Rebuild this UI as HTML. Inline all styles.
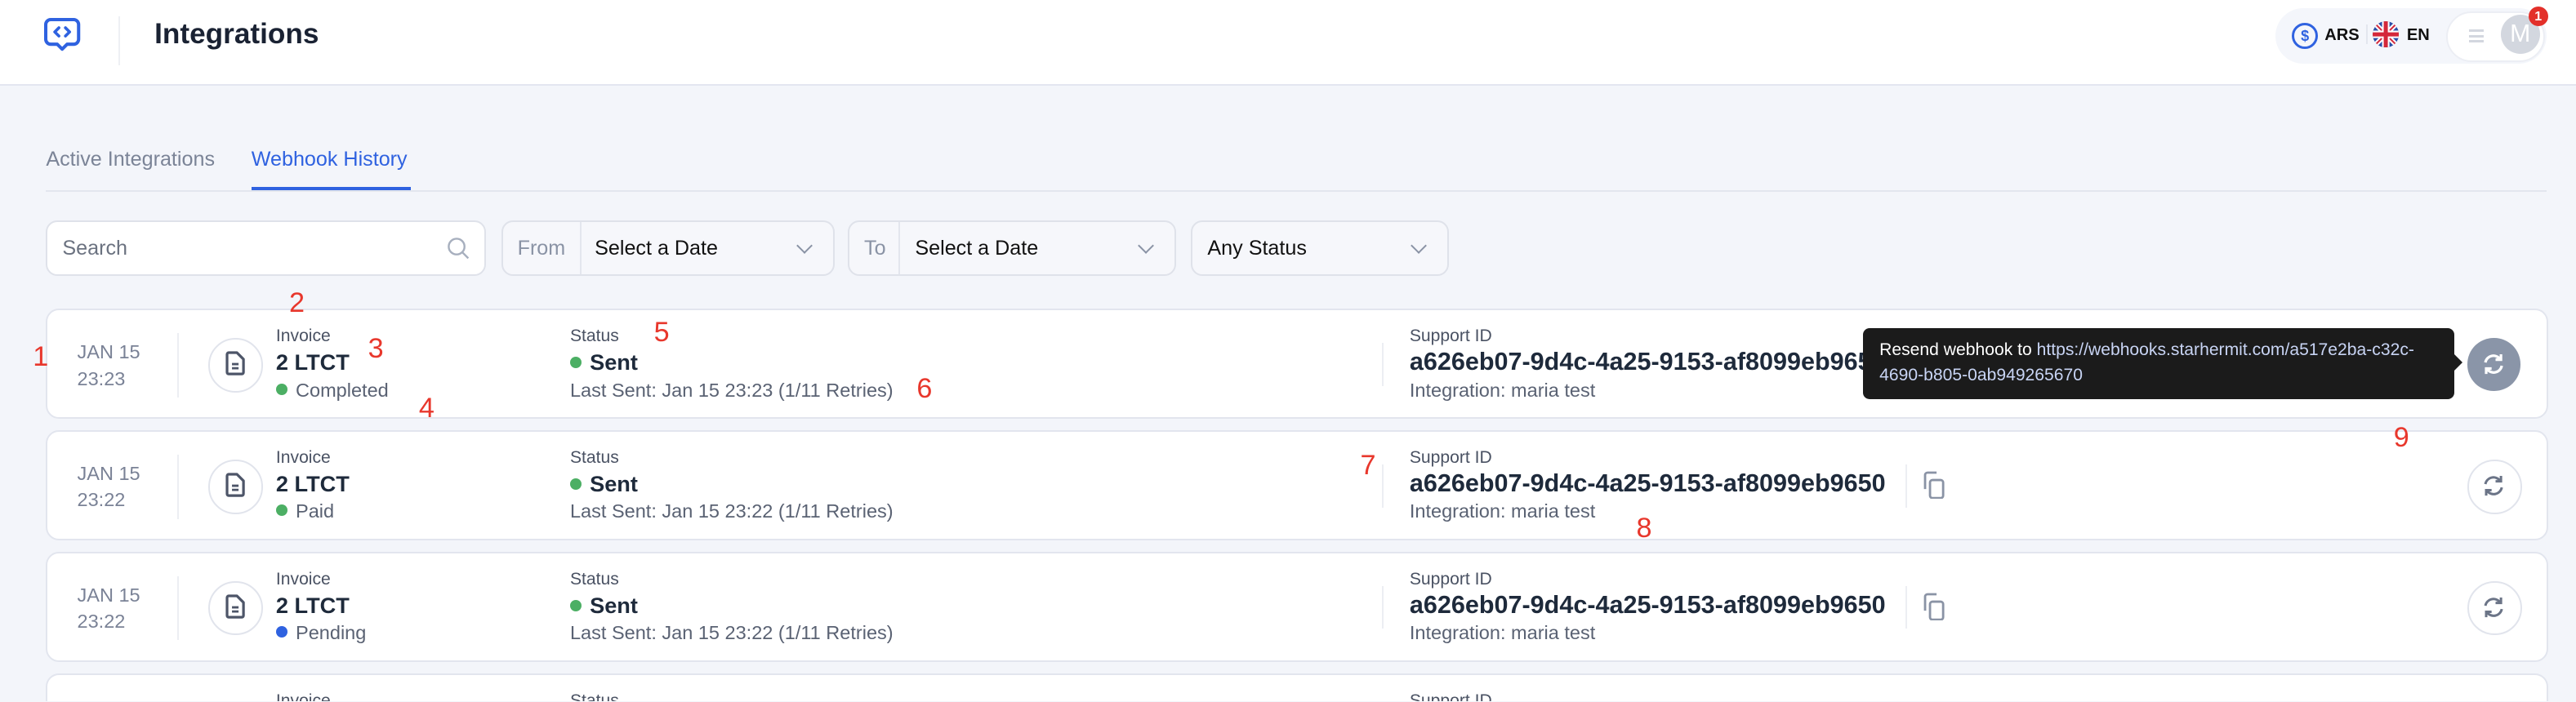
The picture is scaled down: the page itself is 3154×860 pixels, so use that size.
<!DOCTYPE html>
<html><head><meta charset="utf-8"><style>
html{margin:0;padding:0;width:3154px;height:860px;overflow:hidden}
body{margin:0;padding:0;width:1568px;height:427px;zoom:2.0115;overflow:hidden;background:#f3f5fa;font-family:"Liberation Sans",sans-serif;position:relative;color:#1e2a3b}
.a{position:absolute;white-space:nowrap}
.hdr{position:absolute;left:0;top:0;width:1568px;height:51px;background:#fff;border-bottom:1px solid #e3e6f0}
.row{position:absolute;left:28px;width:1523px;height:67px;background:#fff;border:1px solid #e2e5ee;border-radius:8px;box-sizing:border-box;overflow:hidden}
.lbl{font-size:10.5px;color:#4a5263}
.big{font-size:13.5px;font-weight:bold;color:#1e2a3b}
.uuid{font-size:15.2px;font-weight:bold;color:#1e2a3b}
.sub{font-size:11.7px;color:#5a6273}
.dot{display:inline-block;width:7px;height:7px;border-radius:50%;margin-right:5px;vertical-align:1px}
.num{position:absolute;color:#e8372c;font-size:17px;line-height:17px}
.box{position:absolute;top:134px;height:34px;border:1px solid #dfe2ea;border-radius:7px;box-sizing:border-box;background:#f6f7fb;font-size:12.5px}
.chev{position:absolute;right:14px;top:11px;width:6px;height:6px;border-right:1px solid #8a93a5;border-bottom:1px solid #8a93a5;transform:rotate(45deg)}
</style></head><body>
<div class="hdr">
  <svg class="a" style="left:27px;top:10px" width="22" height="22" viewBox="0 0 22 22"><path d="M4 2h14a3 3 0 0 1 3 3v9a3 3 0 0 1-3 3h-4l-3 3-3-3H4a3 3 0 0 1-3-3V5a3 3 0 0 1 3-3z" fill="none" stroke="#2f62e0" stroke-width="2" stroke-linejoin="round"/><path d="M9 7l-2.5 2.5L9 12M13 7l2.5 2.5L13 12" fill="none" stroke="#2f62e0" stroke-width="1.8" stroke-linecap="round" stroke-linejoin="round"/></svg>
  <div class="a" style="left:72px;top:10px;width:1px;height:30px;background:#eef0f4"></div>
  <div class="a" style="left:94px;top:11px;font-size:17.5px;font-weight:bold;color:#1a2233">Integrations</div>
  <div class="a" style="left:1385px;top:5px;width:165px;height:34px;border-radius:17px;background:#f4f6fb"></div>
  <div class="a" style="left:1395px;top:14px;width:13px;height:13px;border:1.5px solid #2f62e0;border-radius:50%;font-size:9px;font-weight:bold;color:#2f62e0;text-align:center;line-height:13px">$</div>
  <div class="a" style="left:1415px;top:16px;font-size:10px;font-weight:bold;color:#111">ARS</div>
  <div class="a" style="left:1440px;top:15px;width:1px;height:12px;background:#e3e6ee"></div>
  <svg class="a" style="left:1444px;top:13px" width="16" height="16" viewBox="0 0 16 16"><clipPath id="c"><circle cx="8" cy="8" r="8"/></clipPath><g clip-path="url(#c)"><rect width="16" height="16" fill="#2a4fa8"/><path d="M0 0L16 16M16 0L0 16" stroke="#fff" stroke-width="3"/><path d="M0 0L16 16M16 0L0 16" stroke="#d4283a" stroke-width="1"/><path d="M8 0V16M0 8H16" stroke="#fff" stroke-width="4.5"/><path d="M8 0V16M0 8H16" stroke="#d4283a" stroke-width="2.5"/></g></svg>
  <div class="a" style="left:1465px;top:16px;font-size:10px;font-weight:bold;color:#111">EN</div>
  <div class="a" style="left:1489px;top:7px;width:60px;height:31px;border-radius:16px;background:#fff;border:1px solid #eceef4;box-sizing:border-box"></div>
  <div class="a" style="left:1503px;top:18px;width:9px;height:8px;border-top:1.5px solid #d3d7df;border-bottom:1.5px solid #d3d7df;box-sizing:border-box"></div>
  <div class="a" style="left:1503px;top:21.3px;width:9px;height:1.5px;background:#d3d7df"></div>
  <div class="a" style="left:1522px;top:9px;width:24px;height:24px;border-radius:50%;background:#d3d7df;color:#fff;font-size:15px;text-align:center;line-height:24px">M</div>
  <div class="a" style="left:1539px;top:4px;width:12px;height:12px;border-radius:50%;background:#e3302a;color:#fff;font-size:8px;font-weight:bold;text-align:center;line-height:12px">1</div>
</div>

<div class="a" style="left:28px;top:90px;font-size:12.5px;color:#7b8497">Active Integrations</div>
<div class="a" style="left:153px;top:90px;font-size:12.5px;color:#2f62e0">Webhook History</div>
<div class="a" style="left:28px;top:116px;width:1522px;height:1px;background:#e3e6ee"></div>
<div class="a" style="left:153px;top:114px;width:97px;height:2px;background:#2f62e0"></div>

<div class="box" style="left:28px;width:268px;background:#fff"><span class="a" style="left:9px;top:9px;color:#6b7280">Search</span>
<svg class="a" style="right:8px;top:9px" width="15" height="15" viewBox="0 0 15 15"><circle cx="6" cy="6" r="4.8" fill="none" stroke="#a7afbe" stroke-width="1.2"/><path d="M9.6 9.6l3.5 3.5" stroke="#a7afbe" stroke-width="1.2"/></svg></div>
<div class="box" style="left:305px;width:203px"><span class="a" style="left:9px;top:9px;color:#8a93a5">From</span><div class="a" style="left:47px;top:0;width:1px;height:32px;background:#e3e6ee"></div><span class="a" style="left:56px;top:9px;color:#111">Select a Date</span><div class="chev"></div></div>
<div class="box" style="left:516px;width:200px"><span class="a" style="left:9px;top:9px;color:#8a93a5">To</span><div class="a" style="left:30px;top:0;width:1px;height:32px;background:#e3e6ee"></div><span class="a" style="left:40px;top:9px;color:#111">Select a Date</span><div class="chev"></div></div>
<div class="box" style="left:725px;width:157px"><span class="a" style="left:9px;top:9px;color:#111">Any Status</span><div class="chev"></div></div>

<div class="row" style="top:188px">
 <div class="a sub" style="left:18px;top:19px;color:#7a8296">JAN 15</div><div class="a sub" style="left:18px;top:35px;color:#7a8296">23:23</div>
 <div class="a" style="left:79px;top:14px;width:1px;height:39px;background:#eceef3"></div>
 <div class="a" style="left:98px;top:17px;width:31px;height:31px;border:1px solid #e1e4ec;border-radius:50%"></div>
 <svg class="a" style="left:108px;top:25px" width="12" height="15" viewBox="0 0 12 15"><path d="M2 1h5l4 4v8a1 1 0 0 1-1 1H2a1 1 0 0 1-1-1V2a1 1 0 0 1 1-1z" fill="none" stroke="#4d5568" stroke-width="1.6" stroke-linejoin="round"/><path d="M4 8h4M4 10.5h4" stroke="#4d5568" stroke-width="1.4"/></svg>
 <div class="a lbl" style="left:139px;top:10px">Invoice</div><div class="a big" style="left:139px;top:24px">2 LTCT</div><div class="a sub" style="left:139px;top:42px"><span class="dot" style="background:#4caf64"></span>Completed</div>
 <div class="a lbl" style="left:318px;top:10px">Status</div><div class="a big" style="left:318px;top:24px"><span class="dot" style="background:#4caf64"></span>Sent</div><div class="a sub" style="left:318px;top:42px">Last Sent: Jan 15 23:23 (1/11 Retries)</div>
 <div class="a" style="left:812px;top:20px;width:1px;height:26px;background:#eceef3"></div>
 <div class="a lbl" style="left:829px;top:10px">Support ID</div><div class="a uuid" style="left:829px;top:23px">a626eb07-9d4c-4a25-9153-af8099eb9650</div><div class="a sub" style="left:829px;top:42px">Integration: maria test</div>
 <div class="a" style="left:1473px;top:17px;width:32px;height:32px;border-radius:50%;background:#8a95a8"></div>
 <svg class="a" style="left:1482px;top:26px" width="14" height="14" viewBox="0 0 14 14"><path d="M2 6a5 5 0 0 1 9-2M12 8a5 5 0 0 1-9 2" fill="none" stroke="#fff" stroke-width="1.6"/><path d="M11.5 1v3.3H8.2M2.5 13V9.7h3.3" fill="none" stroke="#fff" stroke-width="1.6"/></svg>
</div>
<div class="a" style="left:1134px;top:200px;width:360px;height:43px;background:#1b1b1b;border-radius:4px"></div>
<div class="a" style="left:1494px;top:216px;width:0;height:0;border-top:5px solid transparent;border-bottom:5px solid transparent;border-left:5px solid #1b1b1b"></div>
<div class="a" style="left:1144px;top:206px;font-size:10.5px;line-height:15px;color:#fff">Resend webhook to <span style="color:#c8d4f4">https://webhooks.starhermit.com/a517e2ba-c32c-</span><br><span style="color:#c8d4f4">4690-b805-0ab949265670</span></div>

<div class="row" style="top:262px">
 <div class="a sub" style="left:18px;top:19px;color:#7a8296">JAN 15</div><div class="a sub" style="left:18px;top:35px;color:#7a8296">23:22</div>
 <div class="a" style="left:79px;top:14px;width:1px;height:39px;background:#eceef3"></div>
 <div class="a" style="left:98px;top:17px;width:31px;height:31px;border:1px solid #e1e4ec;border-radius:50%"></div>
 <svg class="a" style="left:108px;top:25px" width="12" height="15" viewBox="0 0 12 15"><path d="M2 1h5l4 4v8a1 1 0 0 1-1 1H2a1 1 0 0 1-1-1V2a1 1 0 0 1 1-1z" fill="none" stroke="#4d5568" stroke-width="1.6" stroke-linejoin="round"/><path d="M4 8h4M4 10.5h4" stroke="#4d5568" stroke-width="1.4"/></svg>
 <div class="a lbl" style="left:139px;top:10px">Invoice</div><div class="a big" style="left:139px;top:24px">2 LTCT</div><div class="a sub" style="left:139px;top:42px"><span class="dot" style="background:#4caf64"></span>Paid</div>
 <div class="a lbl" style="left:318px;top:10px">Status</div><div class="a big" style="left:318px;top:24px"><span class="dot" style="background:#4caf64"></span>Sent</div><div class="a sub" style="left:318px;top:42px">Last Sent: Jan 15 23:22 (1/11 Retries)</div>
 <div class="a" style="left:812px;top:20px;width:1px;height:26px;background:#eceef3"></div>
 <div class="a lbl" style="left:829px;top:10px">Support ID</div><div class="a uuid" style="left:829px;top:23px">a626eb07-9d4c-4a25-9153-af8099eb9650</div><div class="a sub" style="left:829px;top:42px">Integration: maria test</div>
 <div class="a" style="left:1131px;top:20px;width:1px;height:26px;background:#eceef3"></div>
 <svg class="a" style="left:1141px;top:24px" width="15" height="17" viewBox="0 0 15 17"><path d="M5 15V7a1.5 1.5 0 0 1 1.5-1.5h5A1.5 1.5 0 0 1 13 7v8a1.5 1.5 0 0 1-1.5 1.5h-5A1.5 1.5 0 0 1 5 15z" fill="none" stroke="#8a93a5" stroke-width="1.4"/><path d="M2 11V2.5A1.5 1.5 0 0 1 3.5 1H9" fill="none" stroke="#8a93a5" stroke-width="1.4"/></svg>
 <div class="a" style="left:1473px;top:17px;width:31px;height:31px;border-radius:50%;border:1px solid #e1e4ec"></div>
 <svg class="a" style="left:1482px;top:26px" width="14" height="14" viewBox="0 0 14 14"><path d="M2 6a5 5 0 0 1 9-2M12 8a5 5 0 0 1-9 2" fill="none" stroke="#6b7487" stroke-width="1.5"/><path d="M11.5 1v3.3H8.2M2.5 13V9.7h3.3" fill="none" stroke="#6b7487" stroke-width="1.5"/></svg>
</div>

<div class="row" style="top:336px">
 <div class="a sub" style="left:18px;top:19px;color:#7a8296">JAN 15</div><div class="a sub" style="left:18px;top:35px;color:#7a8296">23:22</div>
 <div class="a" style="left:79px;top:14px;width:1px;height:39px;background:#eceef3"></div>
 <div class="a" style="left:98px;top:17px;width:31px;height:31px;border:1px solid #e1e4ec;border-radius:50%"></div>
 <svg class="a" style="left:108px;top:25px" width="12" height="15" viewBox="0 0 12 15"><path d="M2 1h5l4 4v8a1 1 0 0 1-1 1H2a1 1 0 0 1-1-1V2a1 1 0 0 1 1-1z" fill="none" stroke="#4d5568" stroke-width="1.6" stroke-linejoin="round"/><path d="M4 8h4M4 10.5h4" stroke="#4d5568" stroke-width="1.4"/></svg>
 <div class="a lbl" style="left:139px;top:10px">Invoice</div><div class="a big" style="left:139px;top:24px">2 LTCT</div><div class="a sub" style="left:139px;top:42px"><span class="dot" style="background:#2f62e0"></span>Pending</div>
 <div class="a lbl" style="left:318px;top:10px">Status</div><div class="a big" style="left:318px;top:24px"><span class="dot" style="background:#4caf64"></span>Sent</div><div class="a sub" style="left:318px;top:42px">Last Sent: Jan 15 23:22 (1/11 Retries)</div>
 <div class="a" style="left:812px;top:20px;width:1px;height:26px;background:#eceef3"></div>
 <div class="a lbl" style="left:829px;top:10px">Support ID</div><div class="a uuid" style="left:829px;top:23px">a626eb07-9d4c-4a25-9153-af8099eb9650</div><div class="a sub" style="left:829px;top:42px">Integration: maria test</div>
 <div class="a" style="left:1131px;top:20px;width:1px;height:26px;background:#eceef3"></div>
 <svg class="a" style="left:1141px;top:24px" width="15" height="17" viewBox="0 0 15 17"><path d="M5 15V7a1.5 1.5 0 0 1 1.5-1.5h5A1.5 1.5 0 0 1 13 7v8a1.5 1.5 0 0 1-1.5 1.5h-5A1.5 1.5 0 0 1 5 15z" fill="none" stroke="#8a93a5" stroke-width="1.4"/><path d="M2 11V2.5A1.5 1.5 0 0 1 3.5 1H9" fill="none" stroke="#8a93a5" stroke-width="1.4"/></svg>
 <div class="a" style="left:1473px;top:17px;width:31px;height:31px;border-radius:50%;border:1px solid #e1e4ec"></div>
 <svg class="a" style="left:1482px;top:26px" width="14" height="14" viewBox="0 0 14 14"><path d="M2 6a5 5 0 0 1 9-2M12 8a5 5 0 0 1-9 2" fill="none" stroke="#6b7487" stroke-width="1.5"/><path d="M11.5 1v3.3H8.2M2.5 13V9.7h3.3" fill="none" stroke="#6b7487" stroke-width="1.5"/></svg>
</div>

<div class="row" style="top:410px;height:17px;border-bottom:none;border-radius:8px 8px 0 0">
 <div class="a" style="left:98px;top:17px;width:31px;height:31px;border:1px solid #e1e4ec;border-radius:50%"></div>
 <div class="a lbl" style="left:139px;top:10px">Invoice</div>
 <div class="a lbl" style="left:318px;top:10px">Status</div>
 <div class="a lbl" style="left:829px;top:10px">Support ID</div>
</div>

<div class="num" style="left:20px;top:209px">1</div>
<div class="num" style="left:176px;top:176px">2</div>
<div class="num" style="left:224px;top:204px">3</div>
<div class="num" style="left:255px;top:240px">4</div>
<div class="num" style="left:398px;top:194px">5</div>
<div class="num" style="left:558px;top:228px">6</div>
<div class="num" style="left:828px;top:275px">7</div>
<div class="num" style="left:996px;top:313px">8</div>
<div class="num" style="left:1457px;top:258px">9</div>
</body></html>
